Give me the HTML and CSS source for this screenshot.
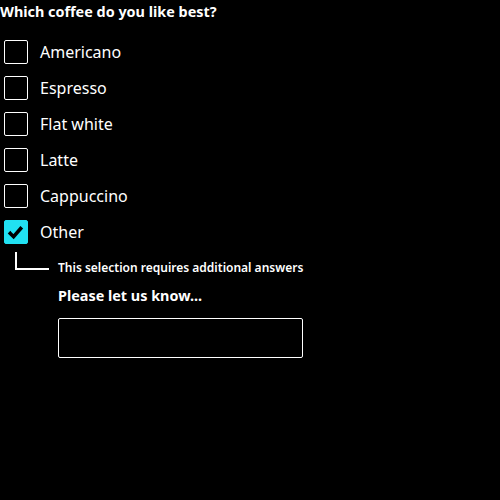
FILE: index.html
```html
<!DOCTYPE html>
<html>
<head>
<meta charset="utf-8">
<link rel="stylesheet" href="styles.css">
</head>
<body>
<div class="question">
  <div class="title">Which coffee do you like best?</div>
  <div class="options">
    <div class="option"><span class="box"></span><span class="label">Americano</span></div>
    <div class="option"><span class="box"></span><span class="label">Espresso</span></div>
    <div class="option"><span class="box"></span><span class="label">Flat white</span></div>
    <div class="option"><span class="box"></span><span class="label">Latte</span></div>
    <div class="option"><span class="box"></span><span class="label">Cappuccino</span></div>
    <div class="option"><span class="box checked"><svg viewBox="0 0 24 24" width="24" height="24"><path d="M6.3 13.4 L9.6 16.7 L16.6 8.6" fill="none" stroke="#000" stroke-width="3.6" stroke-linecap="square" stroke-linejoin="miter"/></svg></span><span class="label">Other</span></div>
  </div>
  <div class="followup">
    <span class="elbow"></span>
    <span class="note">This selection requires additional answers</span>
  </div>
  <div class="extra">
    <div class="extra-label">Please let us know...</div>
    <div class="input"></div>
  </div>
</div>
</body>
</html>
```
FILE: styles.css
```css
html, body {
  margin: 0;
  background: #000;
  color: #fff;
  font-family: "Noto Sans", "Open Sans", sans-serif;
}
.question {
  padding-top: 2px;
}
.title {
  font-weight: 700;
  font-size: 14.4px;
  line-height: 20px;
}
.options {
  margin-top: 18px;
  display: flex;
  flex-direction: column;
  gap: 12px;
}
.option {
  display: flex;
  align-items: center;
  gap: 12px;
  padding-left: 4px;
  height: 24px;
}
.box {
  box-sizing: border-box;
  width: 24px;
  height: 24px;
  border: 1.5px solid #fff;
  border-radius: 2px;
  display: flex;
}
.box.checked {
  background: #21e1f2;
  border-color: #21e1f2;
}
.box.checked svg {
  margin: -1.5px;
}
.label {
  font-size: 16px;
  line-height: 24px;
}
.followup {
  display: flex;
  align-items: flex-end;
  margin-top: 8px;
  padding-left: 15px;
}
.elbow {
  width: 32px;
  height: 16px;
  border-left: 2px solid #fff;
  border-bottom: 2px solid #fff;
}
.note {
  font-size: 12px;
  font-weight: 600;
  line-height: 16px;
  margin-left: 9px;
  margin-bottom: -6px;
}
.extra {
  padding-left: 58px;
  margin-top: 16px;
}
.extra-label {
  font-size: 14.4px;
  font-weight: 700;
  line-height: 20px;
}
.input {
  margin-top: 12px;
  box-sizing: border-box;
  width: 245px;
  height: 40px;
  border: 1.5px solid #fff;
  border-radius: 2px;
}
```
